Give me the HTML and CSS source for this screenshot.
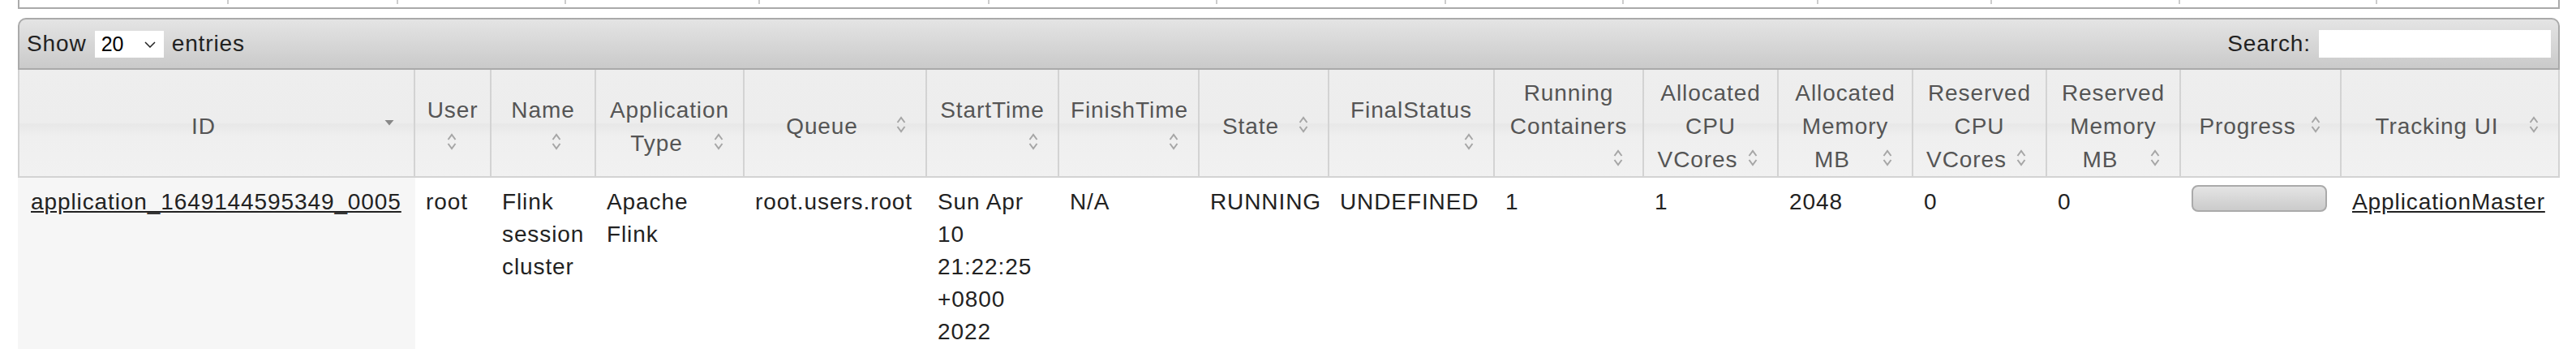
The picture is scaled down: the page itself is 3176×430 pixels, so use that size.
FILE: index.html
```html
<!DOCTYPE html>
<html>
<head>
<meta charset="utf-8">
<title>Applications</title>
<link rel="stylesheet" href="styles.css">
</head>
<body>
<div class="page">
  <div class="metrics-tail">
    <div class="tick"></div><div class="tick"></div><div class="tick"></div><div class="tick"></div>
    <div class="tick"></div><div class="tick"></div><div class="tick"></div><div class="tick"></div>
    <div class="tick"></div><div class="tick"></div><div class="tick"></div><div class="tick"></div>
    <div class="tick"></div>
  </div>

  <div class="toolbar">
    <div class="length">
      <span>Show</span>
      <span class="select"><span class="select-value">20</span>
        <svg class="chev" width="14" height="8" viewBox="0 0 14 8"><path d="M1 1 L7 7 L13 1" fill="none" stroke="#222" stroke-width="1.5"/></svg>
      </span>
      <span>entries</span>
    </div>
    <div class="search">
      <span>Search:</span>
      <input class="search-input" type="text">
    </div>
  </div>

  <table class="apps">
    <colgroup>
      <col class="w-id"><col class="w-user"><col class="w-name"><col class="w-type"><col class="w-queue">
      <col class="w-start"><col class="w-finish"><col class="w-state"><col class="w-final"><col class="w-run">
      <col class="w-acpu"><col class="w-amem"><col class="w-rcpu"><col class="w-rmem"><col class="w-prog"><col class="w-track">
    </colgroup>
    <thead>
      <tr>
        <th class="first">ID<span class="sort"><svg width="32" height="41" viewBox="0 0 32 41"><path d="M10.5 13 L21.5 13 L16 19.5 Z" fill="#888"/></svg></span></th>
        <th>User<span class="sort inset"><svg width="32" height="41" viewBox="0 0 32 41"><path d="M11.5 16 L16 10 L20.5 16 M11.5 21 L16 27 L20.5 21" fill="none" stroke="#a6a6a6" stroke-width="2"/></svg></span></th>
        <th>Name<span class="sort inset"><svg width="32" height="41" viewBox="0 0 32 41"><path d="M11.5 16 L16 10 L20.5 16 M11.5 21 L16 27 L20.5 21" fill="none" stroke="#a6a6a6" stroke-width="2"/></svg></span></th>
        <th>Application Type<span class="sort"><svg width="32" height="41" viewBox="0 0 32 41"><path d="M11.5 16 L16 10 L20.5 16 M11.5 21 L16 27 L20.5 21" fill="none" stroke="#a6a6a6" stroke-width="2"/></svg></span></th>
        <th>Queue<span class="sort"><svg width="32" height="41" viewBox="0 0 32 41"><path d="M11.5 16 L16 10 L20.5 16 M11.5 21 L16 27 L20.5 21" fill="none" stroke="#a6a6a6" stroke-width="2"/></svg></span></th>
        <th>StartTime<span class="sort"><svg width="32" height="41" viewBox="0 0 32 41"><path d="M11.5 16 L16 10 L20.5 16 M11.5 21 L16 27 L20.5 21" fill="none" stroke="#a6a6a6" stroke-width="2"/></svg></span></th>
        <th>FinishTime<span class="sort"><svg width="32" height="41" viewBox="0 0 32 41"><path d="M11.5 16 L16 10 L20.5 16 M11.5 21 L16 27 L20.5 21" fill="none" stroke="#a6a6a6" stroke-width="2"/></svg></span></th>
        <th>State<span class="sort"><svg width="32" height="41" viewBox="0 0 32 41"><path d="M11.5 16 L16 10 L20.5 16 M11.5 21 L16 27 L20.5 21" fill="none" stroke="#a6a6a6" stroke-width="2"/></svg></span></th>
        <th>FinalStatus<span class="sort"><svg width="32" height="41" viewBox="0 0 32 41"><path d="M11.5 16 L16 10 L20.5 16 M11.5 21 L16 27 L20.5 21" fill="none" stroke="#a6a6a6" stroke-width="2"/></svg></span></th>
        <th>Running Containers<span class="sort"><svg width="32" height="41" viewBox="0 0 32 41"><path d="M11.5 16 L16 10 L20.5 16 M11.5 21 L16 27 L20.5 21" fill="none" stroke="#a6a6a6" stroke-width="2"/></svg></span></th>
        <th>Allocated CPU VCores<span class="sort"><svg width="32" height="41" viewBox="0 0 32 41"><path d="M11.5 16 L16 10 L20.5 16 M11.5 21 L16 27 L20.5 21" fill="none" stroke="#a6a6a6" stroke-width="2"/></svg></span></th>
        <th>Allocated Memory MB<span class="sort"><svg width="32" height="41" viewBox="0 0 32 41"><path d="M11.5 16 L16 10 L20.5 16 M11.5 21 L16 27 L20.5 21" fill="none" stroke="#a6a6a6" stroke-width="2"/></svg></span></th>
        <th>Reserved CPU VCores<span class="sort"><svg width="32" height="41" viewBox="0 0 32 41"><path d="M11.5 16 L16 10 L20.5 16 M11.5 21 L16 27 L20.5 21" fill="none" stroke="#a6a6a6" stroke-width="2"/></svg></span></th>
        <th>Reserved Memory MB<span class="sort"><svg width="32" height="41" viewBox="0 0 32 41"><path d="M11.5 16 L16 10 L20.5 16 M11.5 21 L16 27 L20.5 21" fill="none" stroke="#a6a6a6" stroke-width="2"/></svg></span></th>
        <th>Progress<span class="sort"><svg width="32" height="41" viewBox="0 0 32 41"><path d="M11.5 16 L16 10 L20.5 16 M11.5 21 L16 27 L20.5 21" fill="none" stroke="#a6a6a6" stroke-width="2"/></svg></span></th>
        <th>Tracking UI<span class="sort"><svg width="32" height="41" viewBox="0 0 32 41"><path d="M11.5 16 L16 10 L20.5 16 M11.5 21 L16 27 L20.5 21" fill="none" stroke="#a6a6a6" stroke-width="2"/></svg></span></th>
      </tr>
    </thead>
    <tbody>
      <tr>
        <td class="sorted"><a href="#">application_1649144595349_0005</a></td>
        <td>root</td>
        <td>Flink session cluster</td>
        <td>Apache Flink</td>
        <td>root.users.root</td>
        <td>Sun Apr 10 21:22:25 +0800 2022</td>
        <td>N/A</td>
        <td>RUNNING</td>
        <td>UNDEFINED</td>
        <td>1</td>
        <td>1</td>
        <td>2048</td>
        <td>0</td>
        <td>0</td>
        <td><div class="progress"></div></td>
        <td><a href="#">ApplicationMaster</a></td>
      </tr>
    </tbody>
  </table>
</div>
</body>
</html>
```
FILE: styles.css
```css
* { box-sizing: border-box; }

body {
  margin: 0;
  background: #fff;
  font-family: "Liberation Sans", Arial, Helvetica, sans-serif;
  font-size: 28px;
  letter-spacing: 0.9px;
  color: #222;
}

.page {
  padding: 0 20px 0 22px;
}

.metrics-tail {
  display: grid;
  grid-template-columns: 258px 209px 207px 239px 283px 281px 282px 219px 240px 214px 232px 243px 1fr;
  align-items: start;
  height: 11px;
  border: 2px solid #aaa;
  border-top: 0;
}

.tick {
  height: 5px;
  border-right: 2px solid #cccccc;
}

.tick:last-child { border-right: 0; }

.toolbar {
  margin-top: 11px;
  height: 64px;
  display: flex;
  align-items: center;
  justify-content: space-between;
  padding: 0 9px 0 9px;
  border: 2px solid #aaa;
  border-radius: 10px 10px 0 0;
  background: linear-gradient(#e4e4e4, #cacaca);
}

.length, .search {
  display: flex;
  align-items: center;
  gap: 10px;
}

.select {
  display: flex;
  align-items: center;
  justify-content: space-between;
  width: 85px;
  height: 33px;
  padding: 0 10px 0 8px;
  background: #fff;
  color: #000;
  font-size: 25px;
  letter-spacing: 0;
}

.chev { margin-top: 2px; }

.search-input {
  width: 286px;
  height: 34px;
  border: 0;
  margin: 0;
  padding: 0 6px;
  background: #fff;
  font: inherit;
}

.apps {
  width: 3134px;
  table-layout: fixed;
  border-collapse: separate;
  border-spacing: 0;
}

.w-id { width: 490px; }
.w-user { width: 94px; }
.w-name { width: 129px; }
.w-type { width: 183px; }
.w-queue { width: 225px; }
.w-start { width: 163px; }
.w-finish { width: 173px; }
.w-state { width: 160px; }
.w-final { width: 204px; }
.w-run { width: 184px; }
.w-acpu { width: 166px; }
.w-amem { width: 166px; }
.w-rcpu { width: 165px; }
.w-rmem { width: 165px; }
.w-prog { width: 198px; }
.w-track { width: 269px; }

.apps th {
  height: 133px;
  padding: 8px 14px 0 14px;
  line-height: 41px;
  font-weight: normal;
  color: #555;
  text-align: center;
  vertical-align: middle;
  border-right: 2px solid #d3d3d3;
  border-bottom: 2px solid #d3d3d3;
  background: linear-gradient(#eeeeee 0, #ededed 50%, #e8e8e8 51%, #efefef 62%, #f1f1f1 100%);
}

.apps th.first { border-left: 2px solid #d3d3d3; }

.sort {
  float: right;
  width: 32px;
  height: 41px;
}

.sort svg { display: block; }

.sort.inset { margin-right: 17px; }

.apps td {
  padding: 10px 10px 8px 13px;
  line-height: 40px;
  vertical-align: top;
  color: #222;
}

.apps td.sorted {
  background: #f6f6f6;
  padding-left: 16px;
}

.apps a {
  color: #222;
  text-decoration: underline;
}

.progress {
  width: 167px;
  height: 33px;
  margin-top: -1px;
  border: 2px solid #aaa;
  border-radius: 8px;
  background: linear-gradient(#e4e4e4, #cbcbcb);
}
```
